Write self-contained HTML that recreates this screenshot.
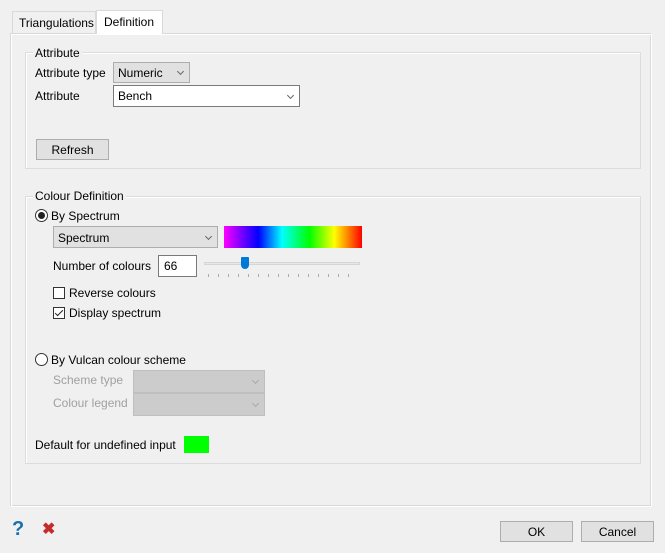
<!DOCTYPE html>
<html><head><style>
body{margin:0;width:665px;height:553px;background:#f0f0f0;font-family:"Liberation Sans",sans-serif;font-size:12px;color:#000;position:relative;overflow:hidden}
.a{position:absolute}
.grp{position:absolute;border:1px solid #dcdcdc;box-shadow:inset 1px 1px 0 #fff}
.lbl{position:absolute;background:#f0f0f0;padding:0 2px;line-height:14px}
.cb{position:absolute;height:21px;box-sizing:border-box;border:1px solid #adadad;background:#e1e1e1;line-height:21px;padding-left:4px}
.cb.w{background:#fff;border-color:#7a7a7a}
.cb.d{background:#ccc;border-color:#bfbfbf}
.chev{position:absolute;right:6px;top:6px;width:4px;height:4px;border-right:1px solid #666;border-bottom:1px solid #666;transform:rotate(45deg)}
.d .chev{border-color:#aaa}
.btn{position:absolute;height:21px;box-sizing:border-box;border:1px solid #adadad;background:#e1e1e1;text-align:center;line-height:20px}
.box{position:absolute;width:12px;height:12px;box-sizing:border-box;border:1px solid #333;background:#fff}
.rad{position:absolute;width:13px;height:13px;box-sizing:border-box;border:1px solid #333;border-radius:50%;background:#fff}
</style></head><body>
<div class="a" style="left:10px;top:33px;width:642px;height:474px;border-left:1px solid #d9d9d9;border-top:1px solid #d9d9d9;border-right:1px solid #fff;border-bottom:1px solid #fff;box-sizing:border-box;box-shadow:inset 1px 1px 0 #fff, inset -1px -1px 0 #d9d9d9"></div>
<div class="a" style="left:12px;top:11px;width:84px;height:22px;border:1px solid #d9d9d9;border-bottom:none;box-sizing:border-box;background:#f0f0f0;line-height:22px;padding-left:6px">Triangulations</div>
<div class="a" style="left:96px;top:10px;width:67px;height:24px;border:1px solid #d9d9d9;border-bottom:none;box-sizing:border-box;background:#fff;line-height:22px;padding-left:7px">Definition</div>

<div class="grp" style="left:25px;top:52px;width:614px;height:115px"></div>
<div class="lbl" style="left:33px;top:46px">Attribute</div>
<div class="a" style="left:35px;top:66px">Attribute type</div>
<div class="cb" style="left:113px;top:62px;width:77px">Numeric<span class="chev"></span></div>
<div class="a" style="left:35px;top:89px">Attribute</div>
<div class="cb w" style="left:113px;top:85px;width:187px;height:22px">Bench<span class="chev" style="top:7px"></span></div>
<div class="btn" style="left:36px;top:139px;width:73px">Refresh</div>

<div class="grp" style="left:25px;top:196px;width:614px;height:266px"></div>
<div class="lbl" style="left:33px;top:189px">Colour Definition</div>
<div class="rad" style="left:35px;top:209px"><div class="a" style="left:2px;top:2px;width:7px;height:7px;border-radius:50%;background:#222"></div></div>
<div class="a" style="left:51px;top:209px">By Spectrum</div>
<div class="cb" style="left:53px;top:226px;width:165px;height:22px;line-height:22px">Spectrum<span class="chev" style="top:7px"></span></div>
<div class="a" style="left:224px;top:226px;width:138px;height:22px;background:linear-gradient(90deg,#f0f 0%,#8000ff 12%,#00f 25%,#0ff 42%,#0f0 62%,#ff0 80%,#ff8000 90%,#f00 100%)"></div>
<div class="a" style="left:53px;top:259px">Number of colours</div>
<div class="a" style="left:158px;top:255px;width:39px;height:22px;box-sizing:border-box;border:1px solid #7a7a7a;background:#fff;line-height:21px;padding-left:5px">66</div>
<div class="a" style="left:204px;top:262px;width:156px;height:3px;background:#e7e7e7;border:1px solid #d6d6d6;box-sizing:border-box"></div>
<div class="a" style="left:241px;top:257px;width:8px;height:12px;background:#0078d7;border-radius:1px 1px 4px 4px"></div>
<div class="a" style="left:208px;top:274px;width:150px;height:3px;background:repeating-linear-gradient(90deg,#aaa 0 1px,transparent 1px 10px)"></div>
<div class="box" style="left:53px;top:287px"></div>
<div class="a" style="left:69px;top:286px">Reverse colours</div>
<div class="box" style="left:53px;top:307px"><div class="a" style="left:3px;top:0px;width:3px;height:7px;border-right:1px solid #222;border-bottom:1px solid #222;transform:rotate(45deg)"></div></div>
<div class="a" style="left:69px;top:306px">Display spectrum</div>

<div class="rad" style="left:35px;top:353px"></div>
<div class="a" style="left:51px;top:353px">By Vulcan colour scheme</div>
<div class="a" style="left:53px;top:373px;color:#a0a0a0">Scheme type</div>
<div class="cb d" style="left:133px;top:370px;width:132px;height:23px"><span class="chev" style="top:7px"></span></div>
<div class="a" style="left:53px;top:396px;color:#a0a0a0">Colour legend</div>
<div class="cb d" style="left:133px;top:393px;width:132px;height:23px"><span class="chev" style="top:7px"></span></div>
<div class="a" style="left:35px;top:438px">Default for undefined input</div>
<div class="a" style="left:184px;top:436px;width:25px;height:17px;background:#0f0"></div>

<div class="a" style="left:12px;top:518px;font-size:20px;font-weight:bold;color:#1a6fb0">?</div>
<div class="a" style="left:42px;top:519px;font-size:16px;font-weight:bold;color:#c42b2b">✖</div>
<div class="btn" style="left:500px;top:521px;width:73px">OK</div>
<div class="btn" style="left:581px;top:521px;width:73px">Cancel</div>
</body></html>
